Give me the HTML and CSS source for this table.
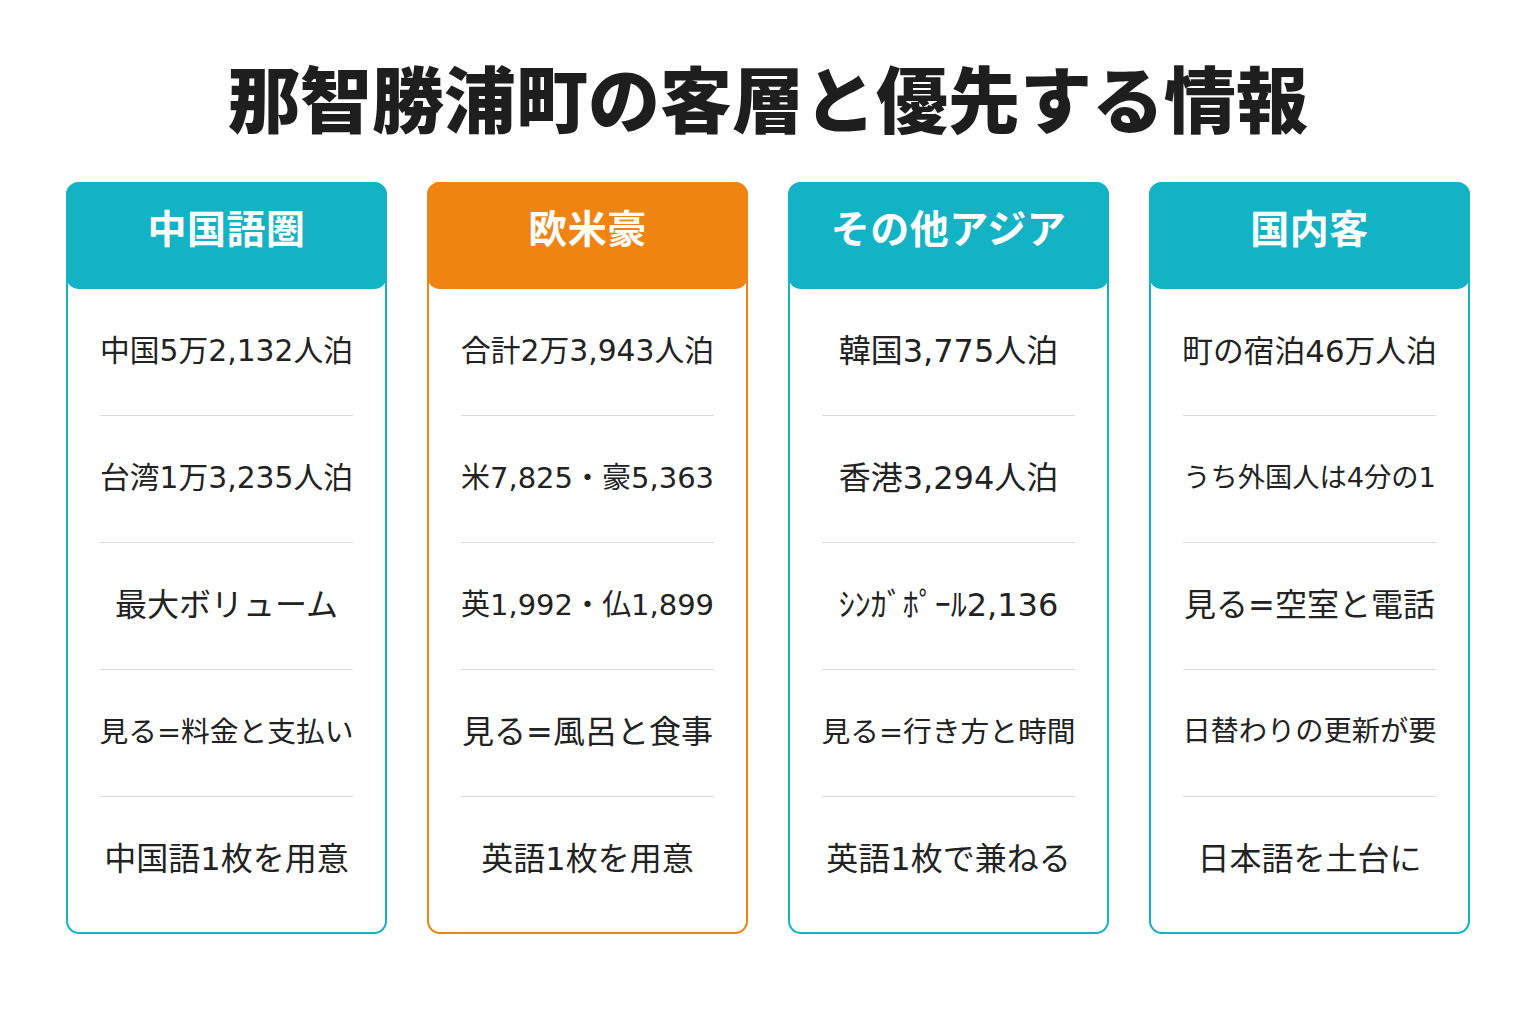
FILE: index.html
```html
<!DOCTYPE html>
<html lang="ja">
<head>
<meta charset="utf-8">
<title>那智勝浦町の客層と優先する情報</title>
<link rel="stylesheet" href="styles.css">
</head>
<body>
<h1 class="title">那智勝浦町の客層と優先する情報</h1>
<div class="cards">
  <section class="card teal">
    <div class="card-head">中国語圏</div>
    <div class="card-body">
      <div class="cell"><span>中国5万2,132人泊</span></div>
      <div class="cell"><span>台湾1万3,235人泊</span></div>
      <div class="cell"><span>最大ボリューム</span></div>
      <div class="cell"><span>見る=料金と支払い</span></div>
      <div class="cell"><span>中国語1枚を用意</span></div>
    </div>
  </section>
  <section class="card orange">
    <div class="card-head">欧米豪</div>
    <div class="card-body">
      <div class="cell"><span>合計2万3,943人泊</span></div>
      <div class="cell"><span>米7,825・豪5,363</span></div>
      <div class="cell"><span>英1,992・仏1,899</span></div>
      <div class="cell"><span>見る=風呂と食事</span></div>
      <div class="cell"><span>英語1枚を用意</span></div>
    </div>
  </section>
  <section class="card teal">
    <div class="card-head">その他アジア</div>
    <div class="card-body">
      <div class="cell"><span>韓国3,775人泊</span></div>
      <div class="cell"><span>香港3,294人泊</span></div>
      <div class="cell"><span>ｼﾝｶﾞﾎﾟｰﾙ2,136</span></div>
      <div class="cell"><span>見る=行き方と時間</span></div>
      <div class="cell"><span>英語1枚で兼ねる</span></div>
    </div>
  </section>
  <section class="card teal">
    <div class="card-head">国内客</div>
    <div class="card-body">
      <div class="cell"><span>町の宿泊46万人泊</span></div>
      <div class="cell"><span>うち外国人は4分の1</span></div>
      <div class="cell"><span>見る=空室と電話</span></div>
      <div class="cell"><span>日替わりの更新が要</span></div>
      <div class="cell"><span>日本語を土台に</span></div>
    </div>
  </section>
</div>
<script src="fit.js"></script>
</body>
</html>
```

FILE: fit.js
```js
document.querySelectorAll('.cell span').forEach(function (s) {
  var size = 32;
  s.style.fontSize = size + 'px';
  while (s.offsetWidth > 254 && size > 10) {
    size -= 0.25;
    s.style.fontSize = size + 'px';
  }
});
```

FILE: styles.css
```css
html, body {
  margin: 0;
  padding: 0;
  background: #ffffff;
}
body {
  width: 1536px;
  height: 1024px;
  font-family: "Noto Sans CJK JP", "Noto Sans", sans-serif;
  color: #222222;
}
.title {
  margin: 0;
  padding-top: 52px;
  height: 122px;
  box-sizing: border-box;
  text-align: center;
  font-size: 72px;
  line-height: 88px;
  font-weight: 900;
  color: #1e1e1e;
}
.cards {
  display: flex;
  gap: 40px;
  padding: 60px 66px 0;
}
.card {
  width: 321px;
  height: 752px;
  box-sizing: border-box;
  border: 2px solid #13b3c5;
  border-radius: 13px;
  display: flex;
  flex-direction: column;
}
.card.orange {
  border-color: #ef8412;
}
.card-head {
  margin: -2px -2px 0;
  height: 107px;
  border-radius: 13px;
  background: #13b3c5;
  color: #ffffff;
  font-size: 39px;
  font-weight: 700;
  display: flex;
  align-items: center;
  justify-content: center;
  padding-bottom: 19px;
  box-sizing: border-box;
  letter-spacing: 0.5px;
}
.orange .card-head {
  background: #ef8412;
}
.card-body {
  display: flex;
  flex-direction: column;
  padding: 0 32px;
}
.cell {
  height: 127px;
  box-sizing: border-box;
  padding-bottom: 2px;
  display: flex;
  align-items: center;
  justify-content: center;
  border-bottom: 1px solid #dcdcdc;
  white-space: nowrap;
}
.cell:last-child {
  border-bottom: none;
}
.cell span {
  font-family: "DejaVu Sans", "Noto Sans CJK JP", sans-serif;
  font-size: 32px;
  line-height: 1.2;
  color: #222222;
  display: inline-block;
}
```
